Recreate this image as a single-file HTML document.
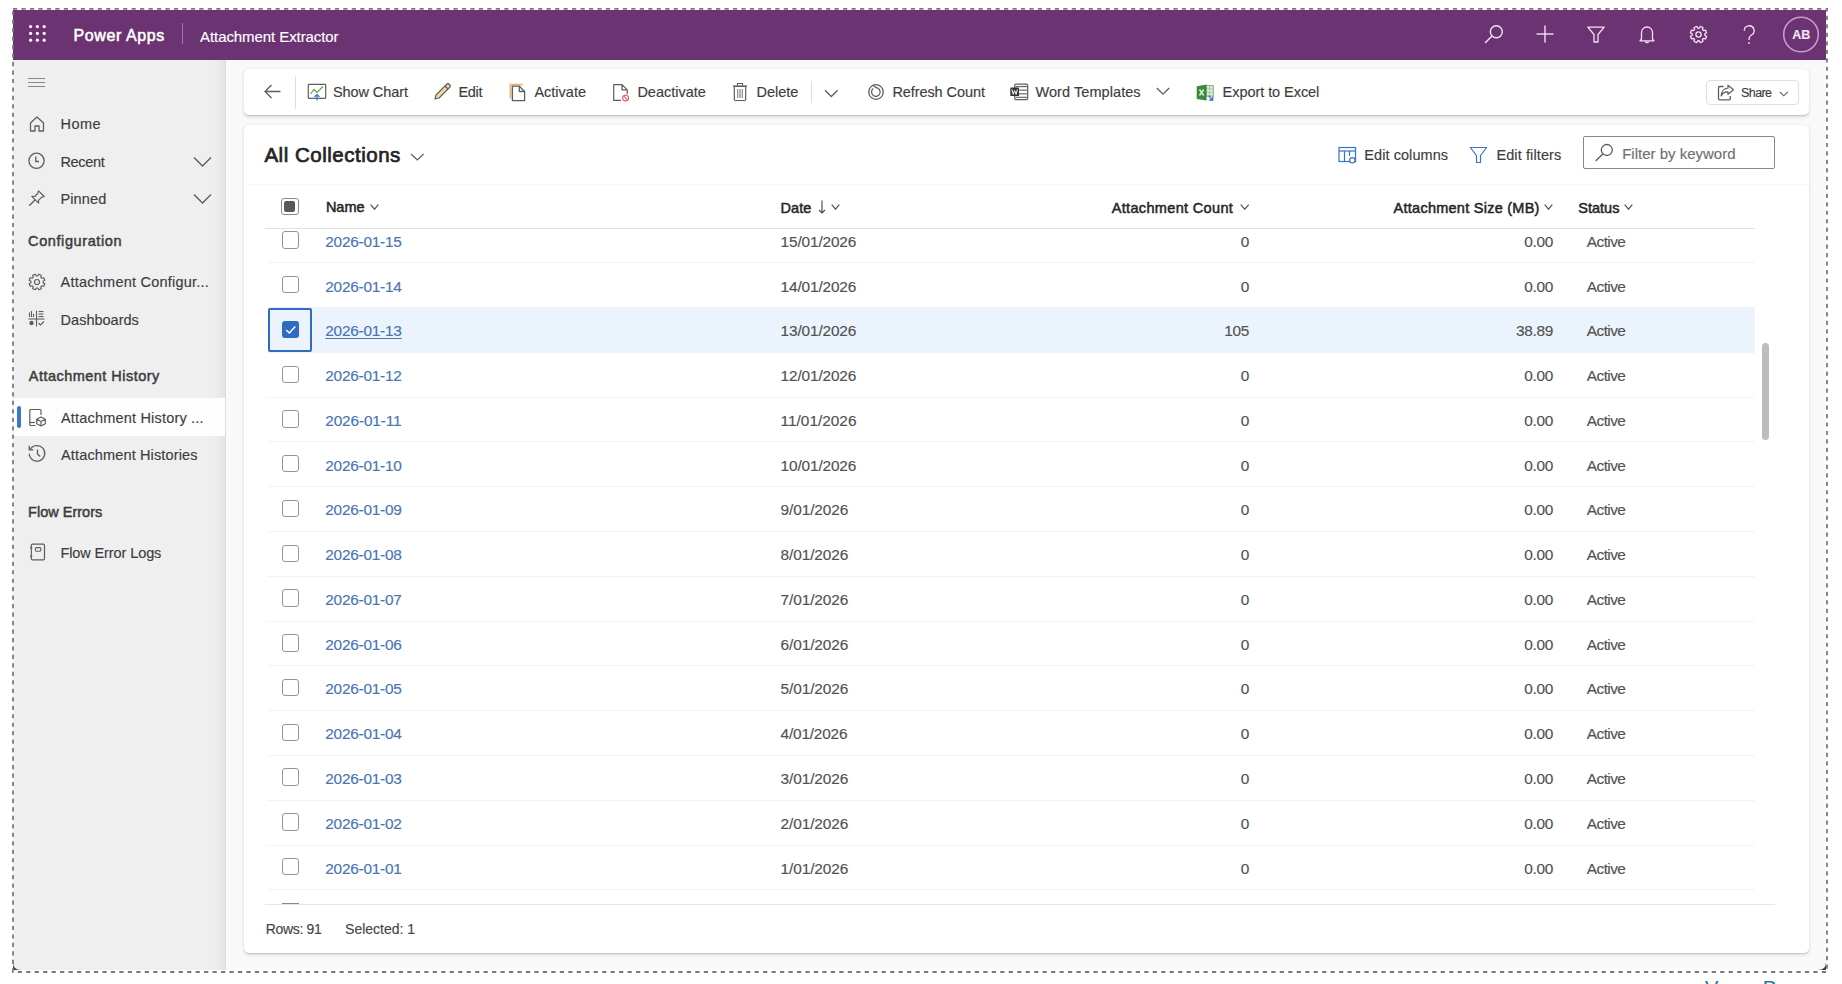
<!DOCTYPE html>
<html><head><meta charset="utf-8"><style>
html,body{margin:0;padding:0;}
body{width:1842px;height:984px;overflow:hidden;position:relative;background:#fff;font-family:"Liberation Sans", sans-serif;}
.t{position:absolute;white-space:nowrap;font-family:"Liberation Sans", sans-serif;-webkit-text-stroke:0.15px currentColor;}
</style></head><body>
<div style="position:absolute;left:13px;top:10px;width:1813px;height:50px;background:#6b3371"></div>
<div style="position:absolute;left:13px;top:60px;width:213px;height:910px;background:#efefef"></div>
<div style="position:absolute;left:213px;top:60px;width:13px;height:910px;background:linear-gradient(to right, rgba(0,0,0,0) , rgba(0,0,0,0.03) 60%, rgba(0,0,0,0.05) 90%, rgba(0,0,0,0.09))"></div>
<div style="position:absolute;left:226px;top:60px;width:1600px;height:910px;background:#f9f9f9"></div>
<svg style="position:absolute;left:29px;top:25px;" width="18" height="18" viewBox="0 0 18 18"><circle cx="1.60" cy="1.60" r="1.6" fill="#fff"/><circle cx="1.60" cy="8.40" r="1.6" fill="#fff"/><circle cx="1.60" cy="15.20" r="1.6" fill="#fff"/><circle cx="8.40" cy="1.60" r="1.6" fill="#fff"/><circle cx="8.40" cy="8.40" r="1.6" fill="#fff"/><circle cx="8.40" cy="15.20" r="1.6" fill="#fff"/><circle cx="15.20" cy="1.60" r="1.6" fill="#fff"/><circle cx="15.20" cy="8.40" r="1.6" fill="#fff"/><circle cx="15.20" cy="15.20" r="1.6" fill="#fff"/></svg>
<div id="t6602c46b" class="t" style="left:73.40px;top:27.96px;font-size:16px;line-height:16px;font-weight:400;-webkit-text-stroke:0.54px #ffffff;color:#ffffff;letter-spacing:0.622px;">Power Apps</div>
<div style="position:absolute;left:182px;top:23px;width:1px;height:21px;background:rgba(255,255,255,0.35)"></div>
<div id="t18563bde" class="t" style="left:200.10px;top:28.80px;font-size:15px;line-height:15px;font-weight:400;color:#ffffff;letter-spacing:-0.084px;">Attachment Extractor</div>
<svg style="position:absolute;left:1484px;top:24px;" width="20" height="20" viewBox="0 0 20 20"><circle cx="12.3" cy="7.7" r="6" fill="none" stroke="#f3e3f3" stroke-width="1.4"/><line x1="8" y1="12" x2="1.5" y2="18.5" stroke="#f3e3f3" stroke-width="1.5" stroke-linecap="round"/></svg>
<svg style="position:absolute;left:1535px;top:24px;" width="20" height="20" viewBox="0 0 20 20"><line x1="10" y1="1.5" x2="10" y2="18.5" stroke="#f3e3f3" stroke-width="1.4"/><line x1="1.5" y1="10" x2="18.5" y2="10" stroke="#f3e3f3" stroke-width="1.4"/></svg>
<svg style="position:absolute;left:1586px;top:25px;" width="20" height="19" viewBox="0 0 20 19"><path d="M1.8 2.2 H18.2 L12 9.5 V17 H8 V9.5 Z" fill="none" stroke="#f3e3f3" stroke-width="1.3" stroke-linejoin="round"/></svg>
<svg style="position:absolute;left:1638px;top:25px;" width="18" height="19" viewBox="0 0 18 19"><path d="M3.5 14 V7.5 A5.5 5.5 0 0 1 14.5 7.5 V14 L16 15.8 H2 Z" fill="none" stroke="#f3e3f3" stroke-width="1.3" stroke-linejoin="round"/><path d="M7.3 16.5 A1.8 1.8 0 0 0 10.7 16.5" fill="none" stroke="#f3e3f3" stroke-width="1.3"/></svg>
<svg style="position:absolute;left:1689px;top:25px;" width="19" height="19" viewBox="0 0 19 19"><path d="M10.21 3.24 L11.30 1.40 L13.96 2.50 L13.42 4.57 L14.43 5.58 L16.50 5.04 L17.60 7.70 L15.76 8.79 L15.76 10.21 L17.60 11.30 L16.50 13.96 L14.43 13.42 L13.42 14.43 L13.96 16.50 L11.30 17.60 L10.21 15.76 L8.79 15.76 L7.70 17.60 L5.04 16.50 L5.58 14.43 L4.57 13.42 L2.50 13.96 L1.40 11.30 L3.24 10.21 L3.24 8.79 L1.40 7.70 L2.50 5.04 L4.57 5.58 L5.58 4.57 L5.04 2.50 L7.70 1.40 L8.79 3.24 Z" fill="none" stroke="#f3e3f3" stroke-width="1.3" stroke-linejoin="round"/><circle cx="9.5" cy="9.5" r="2.6" fill="none" stroke="#f3e3f3" stroke-width="1.3"/></svg>
<svg style="position:absolute;left:1742px;top:24.5px;" width="14" height="20" viewBox="0 0 14 20"><path d="M2.3 5.8 A4.9 4.9 0 1 1 9.5 10 Q7 11.5 7 14 V15" fill="none" stroke="#f3e3f3" stroke-width="1.3"/><circle cx="7" cy="18" r="0.9" fill="#f3e3f3"/></svg>
<svg style="position:absolute;left:1782px;top:16px;" width="38" height="38" viewBox="0 0 38 38"><circle cx="19" cy="18.5" r="17.3" fill="none" stroke="#c89bcf" stroke-width="1.6"/></svg>
<div id="t0d88fd11" class="t" style="left:1792.30px;top:29.12px;font-size:12.5px;line-height:12.5px;font-weight:700;color:#f3e3f3;">AB</div>
<div style="position:absolute;left:28px;top:78px;width:17px;height:1px;background:#8a8886"></div>
<div style="position:absolute;left:28px;top:82px;width:17px;height:1px;background:#8a8886"></div>
<div style="position:absolute;left:28px;top:86px;width:17px;height:1px;background:#8a8886"></div>
<svg style="position:absolute;left:28px;top:115px;" width="18" height="18" viewBox="0 0 18 18"><path d="M2.5 8 L9 2 L15.5 8 V16 H11 V11 H7 V16 H2.5 Z" fill="none" stroke="#605e5c" stroke-width="1.3" stroke-linejoin="round"/></svg>
<div id="t21c2358d" class="t" style="left:60.40px;top:117.33px;font-size:14.5px;line-height:14.5px;font-weight:400;color:#3d3d3d;letter-spacing:0.533px;">Home</div>
<svg style="position:absolute;left:27px;top:152px;" width="19" height="18" viewBox="0 0 19 18"><circle cx="9.5" cy="8.8" r="7.6" fill="none" stroke="#605e5c" stroke-width="1.3"/><path d="M8.8 4.5 V9.5 H12" fill="none" stroke="#605e5c" stroke-width="1.3"/></svg>
<div id="tbc1d9790" class="t" style="left:60.40px;top:155.03px;font-size:14.5px;line-height:14.5px;font-weight:400;color:#3d3d3d;letter-spacing:-0.320px;">Recent</div>
<svg style="position:absolute;left:193px;top:156px;" width="19" height="12" viewBox="0 0 19 12"><path d="M1 1.5 L9.5 10 L18 1.5" fill="none" stroke="#605e5c" stroke-width="1.4"/></svg>
<svg style="position:absolute;left:28px;top:189px;" width="18" height="18" viewBox="0 0 18 18"><path d="M10.5 1.8 L16.2 7.5 L13.5 8.3 L10.5 11.3 L10.6 14.2 L3.8 7.4 L6.7 7.5 L9.7 4.5 Z" fill="none" stroke="#605e5c" stroke-width="1.2" stroke-linejoin="round"/><line x1="7.2" y1="10.8" x2="1.2" y2="16.8" stroke="#605e5c" stroke-width="1.3"/></svg>
<div id="tdf337dc0" class="t" style="left:60.40px;top:191.73px;font-size:14.5px;line-height:14.5px;font-weight:400;color:#3d3d3d;letter-spacing:0.160px;">Pinned</div>
<svg style="position:absolute;left:193px;top:193px;" width="19" height="12" viewBox="0 0 19 12"><path d="M1 1.5 L9.5 10 L18 1.5" fill="none" stroke="#605e5c" stroke-width="1.4"/></svg>
<div id="t0e8f6c4d" class="t" style="left:28.10px;top:233.83px;font-size:14.5px;line-height:14.5px;font-weight:400;-webkit-text-stroke:0.49px #3d3d3d;color:#3d3d3d;letter-spacing:0.600px;">Configuration</div>
<svg style="position:absolute;left:28px;top:272.5px;" width="18" height="18" viewBox="0 0 18 18"><path d="M9.69 2.94 L10.73 1.19 L13.30 2.25 L12.80 4.23 L13.77 5.20 L15.75 4.70 L16.81 7.27 L15.06 8.31 L15.06 9.69 L16.81 10.73 L15.75 13.30 L13.77 12.80 L12.80 13.77 L13.30 15.75 L10.73 16.81 L9.69 15.06 L8.31 15.06 L7.27 16.81 L4.70 15.75 L5.20 13.77 L4.23 12.80 L2.25 13.30 L1.19 10.73 L2.94 9.69 L2.94 8.31 L1.19 7.27 L2.25 4.70 L4.23 5.20 L5.20 4.23 L4.70 2.25 L7.27 1.19 L8.31 2.94 Z" fill="none" stroke="#605e5c" stroke-width="1.15" stroke-linejoin="round"/><circle cx="9" cy="9" r="2.5" fill="none" stroke="#605e5c" stroke-width="1.15"/></svg>
<div id="te1aa6203" class="t" style="left:60.60px;top:275.23px;font-size:14.5px;line-height:14.5px;font-weight:400;color:#3d3d3d;letter-spacing:0.229px;">Attachment Configur...</div>
<svg style="position:absolute;left:28px;top:310px;" width="17" height="17" viewBox="0 0 17 17"><g stroke="#605e5c" stroke-width="1.1" fill="none"><line x1="8.5" y1="0.5" x2="8.5" y2="16.5"/><line x1="0.5" y1="9" x2="16.5" y2="9"/><line x1="10.5" y1="1.5" x2="15.5" y2="1.5"/><line x1="10.5" y1="4" x2="15.5" y2="4"/><line x1="10.5" y1="6.5" x2="15.5" y2="6.5"/><line x1="1.5" y1="2.5" x2="1.5" y2="7"/><line x1="3.5" y1="1" x2="3.5" y2="7"/><line x1="5.5" y1="4" x2="5.5" y2="7"/><path d="M10.5 13 L12.5 15 L16 11.5"/></g><circle cx="3.5" cy="13" r="2.2" fill="#605e5c"/></svg>
<div id="ta0304d43" class="t" style="left:60.60px;top:313.03px;font-size:14.5px;line-height:14.5px;font-weight:400;color:#3d3d3d;">Dashboards</div>
<div id="t8ec4744f" class="t" style="left:28.76px;top:369.23px;font-size:14.5px;line-height:14.5px;font-weight:400;-webkit-text-stroke:0.49px #3d3d3d;color:#3d3d3d;letter-spacing:0.471px;">Attachment History</div>
<div style="position:absolute;left:14px;top:397.5px;width:211px;height:38px;background:#fdfdfd"></div>
<div style="position:absolute;left:17px;top:406px;width:4px;height:21.5px;background:#3a76c8;border-radius:2px"></div>
<svg style="position:absolute;left:28px;top:407.5px;" width="19" height="19" viewBox="0 0 19 19"><path d="M7.5 17.5 H2.8 Q1.8 17.5 1.8 16.5 V2.5 Q1.8 1.5 2.8 1.5 H12 Q13 1.5 13 2.5 V7" fill="none" stroke="#605e5c" stroke-width="1.2"/><line x1="2" y1="14.5" x2="7" y2="14.5" stroke="#605e5c" stroke-width="1.2"/><path d="M13 9 L17.3 11.3 V15.8 L13 18 L8.7 15.8 V11.3 Z M8.7 11.3 L13 13.5 L17.3 11.3 M13 13.5 V18" fill="none" stroke="#605e5c" stroke-width="1.2" stroke-linejoin="round"/></svg>
<div id="td2493323" class="t" style="left:61.00px;top:410.73px;font-size:14.5px;line-height:14.5px;font-weight:400;color:#3d3d3d;letter-spacing:0.190px;">Attachment History ...</div>
<svg style="position:absolute;left:27px;top:444px;" width="20" height="19" viewBox="0 0 20 19"><path d="M3.2 5.5 A7.8 7.8 0 1 1 2.2 9.8" fill="none" stroke="#605e5c" stroke-width="1.3"/><path d="M2.3 1.8 V5.8 H6.3" fill="none" stroke="#605e5c" stroke-width="1.3"/><path d="M10.5 5.5 V10 L13.2 12.5" fill="none" stroke="#605e5c" stroke-width="1.3"/></svg>
<div id="te2b8dc9a" class="t" style="left:61.00px;top:447.73px;font-size:14.5px;line-height:14.5px;font-weight:400;color:#3d3d3d;letter-spacing:0.147px;">Attachment Histories</div>
<div id="t1640815b" class="t" style="left:28.10px;top:504.63px;font-size:14.5px;line-height:14.5px;font-weight:400;-webkit-text-stroke:0.49px #3d3d3d;color:#3d3d3d;">Flow Errors</div>
<svg style="position:absolute;left:29px;top:543px;" width="17" height="18" viewBox="0 0 17 18"><rect x="2.3" y="1.2" width="13.2" height="15.6" rx="1.3" fill="none" stroke="#605e5c" stroke-width="1.2"/><rect x="6.3" y="4.6" width="5.6" height="3.6" rx="1.2" fill="none" stroke="#605e5c" stroke-width="1.1"/><circle cx="2.3" cy="4.9" r="1.1" fill="#605e5c"/><circle cx="2.3" cy="13.3" r="1.1" fill="#605e5c"/></svg>
<div id="te9519f22" class="t" style="left:60.40px;top:546.03px;font-size:14.5px;line-height:14.5px;font-weight:400;color:#3d3d3d;letter-spacing:-0.097px;">Flow Error Logs</div>
<div style="position:absolute;left:244px;top:69px;width:1565px;height:46px;background:#fff;border-radius:5px;box-shadow:0 1.6px 3.6px rgba(0,0,0,0.13),0 0.3px 0.9px rgba(0,0,0,0.11);"></div>
<svg style="position:absolute;left:263px;top:83px;" width="19" height="17" viewBox="0 0 19 17"><path d="M17.5 8.5 H2 M8.5 2 L2 8.5 L8.5 15" fill="none" stroke="#605e5c" stroke-width="1.3"/></svg>
<div style="position:absolute;left:295px;top:75.5px;width:1px;height:33px;background:#e1dfdd"></div>
<svg style="position:absolute;left:307px;top:83px;" width="20" height="18" viewBox="0 0 20 18"><rect x="1.3" y="1.3" width="17.4" height="14" rx="0.5" fill="none" stroke="#605e5c" stroke-width="1.2"/><path d="M3.5 11 L7 6.5 L10 9.5 L16 3.5" fill="none" stroke="#5fa34f" stroke-width="1.2"/><path d="M10 17.5 V11.5 M7.5 14 L10 11.5 L12.5 14" fill="none" stroke="#4a7fd0" stroke-width="1.4"/></svg>
<div id="td1f824ee" class="t" style="left:333.00px;top:85.13px;font-size:14.5px;line-height:14.5px;font-weight:400;color:#3d3d3d;letter-spacing:-0.089px;">Show Chart</div>
<svg style="position:absolute;left:433px;top:82px;" width="19" height="19" viewBox="0 0 19 19"><path d="M3 13 L13.5 2.5 Q15 1 16.5 2.5 Q18 4 16.5 5.5 L6 16 L2 17 Z" fill="#f1dca0" stroke="#605e5c" stroke-width="1.2" stroke-linejoin="round"/><line x1="12" y1="4" x2="15" y2="7" stroke="#605e5c" stroke-width="1.1"/></svg>
<div id="tf201ab12" class="t" style="left:458.40px;top:85.13px;font-size:14.5px;line-height:14.5px;font-weight:400;color:#3d3d3d;letter-spacing:-0.267px;">Edit</div>
<svg style="position:absolute;left:509px;top:82.5px;" width="17" height="19" viewBox="0 0 17 19"><path d="M1.5 15.5 V1.6 H13.6" fill="none" stroke="#f0b27e" stroke-width="1.9"/><path d="M3.4 3.2 H10.3 L15.6 8.5 V17.6 H3.4 Z M10.3 3.2 V8.5 H15.6" fill="#fff" stroke="#605e5c" stroke-width="1.3" stroke-linejoin="round"/></svg>
<div id="tba5afecd" class="t" style="left:534.40px;top:85.13px;font-size:14.5px;line-height:14.5px;font-weight:400;color:#3d3d3d;">Activate</div>
<svg style="position:absolute;left:612px;top:82.5px;" width="19" height="19" viewBox="0 0 19 19"><path d="M9 17.4 H1.7 V1.6 H10 L15.3 6.9 V11 M10 1.6 V6.9 H15.3" fill="none" stroke="#605e5c" stroke-width="1.2" stroke-linejoin="round"/><circle cx="13.6" cy="15" r="2.9" fill="#fff" stroke="#e2686b" stroke-width="1.2"/><line x1="11.7" y1="13.1" x2="15.5" y2="16.9" stroke="#e2686b" stroke-width="1.2"/></svg>
<div id="t9d1102dd" class="t" style="left:637.40px;top:85.13px;font-size:14.5px;line-height:14.5px;font-weight:400;color:#3d3d3d;">Deactivate</div>
<svg style="position:absolute;left:732px;top:82px;" width="16" height="20" viewBox="0 0 16 20"><path d="M2.3 4.5 H13.7 V17.3 Q13.7 18.5 12.5 18.5 H3.5 Q2.3 18.5 2.3 17.3 Z" fill="none" stroke="#605e5c" stroke-width="1.2"/><line x1="0.8" y1="4" x2="15.2" y2="4" stroke="#605e5c" stroke-width="1.2"/><path d="M5.5 3.8 V1.5 H10.5 V3.8" fill="none" stroke="#605e5c" stroke-width="1.1"/><g stroke="#8a8886" stroke-width="0.9"><line x1="5.5" y1="7" x2="5.5" y2="16"/><line x1="7.2" y1="7" x2="7.2" y2="16"/><line x1="8.8" y1="7" x2="8.8" y2="16"/><line x1="10.5" y1="7" x2="10.5" y2="16"/></g></svg>
<div id="t21c448c7" class="t" style="left:756.50px;top:85.13px;font-size:14.5px;line-height:14.5px;font-weight:400;color:#3d3d3d;">Delete</div>
<div style="position:absolute;left:811px;top:81px;width:1px;height:21.5px;background:#e1dfdd"></div>
<svg style="position:absolute;left:824px;top:89px;" width="15" height="9" viewBox="0 0 15 9"><path d="M1 1.3 L7.3 7.5 L13.6 1.3" fill="none" stroke="#605e5c" stroke-width="1.3"/></svg>
<svg style="position:absolute;left:867px;top:83px;" width="18" height="18" viewBox="0 0 18 18"><circle cx="9" cy="9" r="7.3" fill="none" stroke="#605e5c" stroke-width="1.3"/><path d="M6.2 5.6 A4.3 4.3 0 1 0 9 4.7" fill="none" stroke="#605e5c" stroke-width="1.3"/><line x1="9" y1="4.7" x2="6.3" y2="2.3" stroke="#605e5c" stroke-width="1.2"/></svg>
<div id="t2cdb91ce" class="t" style="left:892.40px;top:85.13px;font-size:14.5px;line-height:14.5px;font-weight:400;color:#3d3d3d;letter-spacing:-0.080px;">Refresh Count</div>
<svg style="position:absolute;left:1009px;top:83px;" width="20" height="18" viewBox="0 0 20 18"><rect x="5.7" y="1.1" width="13" height="15.6" rx="1.2" fill="#fff" stroke="#605e5c" stroke-width="1.2"/><g stroke="#605e5c" stroke-width="1.1"><line x1="6.5" y1="3.6" x2="18" y2="3.6"/><line x1="6.5" y1="7.2" x2="18" y2="7.2"/><line x1="6.5" y1="10.8" x2="18" y2="10.8"/><line x1="6.5" y1="14.3" x2="18" y2="14.3"/></g><rect x="1.3" y="4.4" width="8.7" height="8.6" rx="0.6" fill="#34343e"/><path d="M2.9 6.4 L4.2 11.3 L5.65 7.6 L7.1 11.3 L8.4 6.4" fill="none" stroke="#fff" stroke-width="1"/></svg>
<div id="t716e14a8" class="t" style="left:1035.50px;top:84.83px;font-size:14.5px;line-height:14.5px;font-weight:400;color:#3d3d3d;letter-spacing:0.068px;">Word Templates</div>
<svg style="position:absolute;left:1156px;top:87px;" width="14" height="8.5" viewBox="0 0 14 8.5"><path d="M0.8 1 L7 7.2 L13.2 1" fill="none" stroke="#605e5c" stroke-width="1.3"/></svg>
<svg style="position:absolute;left:1195px;top:82.5px;" width="20" height="19" viewBox="0 0 20 19"><rect x="11" y="2.6" width="7.3" height="10.5" fill="#dcefd6" stroke="#86a886" stroke-width="1"/><g stroke="#a6c8a0" stroke-width="0.9"><line x1="14.6" y1="2.6" x2="14.6" y2="13"/><line x1="11" y1="6" x2="18.3" y2="6"/><line x1="11" y1="9.5" x2="18.3" y2="9.5"/></g><path d="M1.7 3.2 L11.6 1.6 V17.6 L1.7 15.9 Z" fill="#3b8a3e"/><path d="M4.5 6.5 L8.7 12.5 M8.7 6.5 L4.5 12.5" fill="none" stroke="#d9f0d9" stroke-width="1.5"/><path d="M13.6 12.6 L17.2 16.6 M17.9 13.6 L17.5 17.2 L14.3 17" fill="none" stroke="#4a6ec6" stroke-width="1.4"/></svg>
<div id="t31882036" class="t" style="left:1222.60px;top:84.83px;font-size:14.5px;line-height:14.5px;font-weight:400;color:#3d3d3d;letter-spacing:-0.057px;">Export to Excel</div>
<div style="position:absolute;left:1706px;top:80px;width:92.5px;height:24.5px;box-sizing:border-box;border:1px solid #e1dfdd;border-radius:4px;background:#fff"></div>
<svg style="position:absolute;left:1717px;top:83.5px;" width="18" height="17" viewBox="0 0 18 17"><path d="M6.5 2.5 H2.8 Q1.5 2.5 1.5 3.8 V14.5 Q1.5 15.8 2.8 15.8 H12 Q13.3 15.8 13.3 14.5 V12" fill="none" stroke="#605e5c" stroke-width="1.3"/><path d="M11 1.2 L16.5 5.8 L11 10.3 V7.8 Q6 7.5 4.2 12 Q4.8 4.5 11 4 Z" fill="none" stroke="#605e5c" stroke-width="1.2" stroke-linejoin="round"/></svg>
<div id="t0bdfb0ec" class="t" style="left:1741.00px;top:86.52px;font-size:12.5px;line-height:12.5px;font-weight:400;color:#3d3d3d;letter-spacing:-0.580px;">Share</div>
<svg style="position:absolute;left:1778.5px;top:90.5px;" width="10" height="6" viewBox="0 0 10 6"><path d="M0.8 0.8 L4.8 4.8 L8.8 0.8" fill="none" stroke="#605e5c" stroke-width="1.1"/></svg>
<div style="position:absolute;left:244px;top:124.5px;width:1565px;height:828px;background:#fff;border-radius:5px;box-shadow:0 1.6px 3.6px rgba(0,0,0,0.13),0 0.3px 0.9px rgba(0,0,0,0.11);"></div>
<div style="position:absolute;left:244px;top:183.5px;width:1565px;height:1px;background:#f8f8f8"></div>
<div id="tb897ce02" class="t" style="left:264.40px;top:145.15px;font-size:20.5px;line-height:20.5px;font-weight:400;-webkit-text-stroke:0.70px #242424;color:#242424;letter-spacing:0.514px;">All Collections</div>
<svg style="position:absolute;left:409.5px;top:152.5px;" width="15" height="8" viewBox="0 0 15 8"><path d="M1 1 L7.3 7 L13.6 1" fill="none" stroke="#605e5c" stroke-width="1.2"/></svg>
<svg style="position:absolute;left:1338px;top:146px;" width="19" height="18" viewBox="0 0 19 18"><rect x="1" y="1.5" width="16.5" height="14" fill="none" stroke="#3a72c4" stroke-width="1.2"/><line x1="1" y1="5" x2="17.5" y2="5" stroke="#3a72c4" stroke-width="1.2"/><line x1="6.5" y1="5" x2="6.5" y2="15.5" stroke="#3a72c4" stroke-width="1.2"/><line x1="11.5" y1="5" x2="11.5" y2="10" stroke="#3a72c4" stroke-width="1.2"/><circle cx="14.3" cy="14.3" r="2.7" fill="#fff" stroke="#3a72c4" stroke-width="1.2"/></svg>
<div id="tb2f9ebc7" class="t" style="left:1364.24px;top:148.23px;font-size:14.5px;line-height:14.5px;font-weight:400;color:#3d3d3d;letter-spacing:0.080px;">Edit columns</div>
<svg style="position:absolute;left:1469px;top:146px;" width="20" height="18" viewBox="0 0 20 18"><path d="M1.3 1.5 H17.7 L11.5 9.5 V16.5 H7.5 V9.5 Z" fill="none" stroke="#3a72c4" stroke-width="1.2" stroke-linejoin="round"/></svg>
<div id="tec400adc" class="t" style="left:1496.40px;top:148.23px;font-size:14.5px;line-height:14.5px;font-weight:400;color:#3d3d3d;letter-spacing:0.109px;">Edit filters</div>
<div style="position:absolute;left:1583px;top:135.5px;width:192px;height:33.5px;box-sizing:border-box;border:1px solid #8a8886;border-radius:2px;background:#fff"></div>
<svg style="position:absolute;left:1595px;top:143px;" width="19" height="19" viewBox="0 0 19 19"><circle cx="11.8" cy="7" r="5.5" fill="none" stroke="#605e5c" stroke-width="1.3"/><line x1="7.8" y1="11" x2="1.2" y2="17.6" stroke="#605e5c" stroke-width="1.4" stroke-linecap="round"/></svg>
<div id="t1c2b44e3" class="t" style="left:1622.20px;top:146.20px;font-size:15px;line-height:15px;font-weight:400;color:#707070;">Filter by keyword</div>
<div style="position:absolute;left:281px;top:197.5px;width:17.5px;height:17.5px;box-sizing:border-box;border:1px solid #8a8886;border-radius:3px;background:#fff"></div>
<div style="position:absolute;left:284px;top:201.2px;width:11px;height:11px;background:#595959;border-radius:2px"></div>
<div id="t7242ff84" class="t" style="left:325.90px;top:200.43px;font-size:14.5px;line-height:14.5px;font-weight:400;-webkit-text-stroke:0.49px #242424;color:#242424;">Name</div>
<svg style="position:absolute;left:369.8px;top:203.5px;" width="9" height="6.5" viewBox="0 0 9 6.5"><path d="M0.7 0.7 L4.5 5.2 L8.3 0.7" fill="none" stroke="#505050" stroke-width="1.2"/></svg>
<div id="te2e174c2" class="t" style="left:780.60px;top:200.53px;font-size:14.5px;line-height:14.5px;font-weight:400;-webkit-text-stroke:0.49px #242424;color:#242424;">Date</div>
<svg style="position:absolute;left:817px;top:199.5px;" width="10" height="14" viewBox="0 0 10 14"><path d="M5 0.5 V13 M2 10 L5 13 L8 10" fill="none" stroke="#4a4a4a" stroke-width="1.15"/></svg>
<svg style="position:absolute;left:830.5px;top:203.5px;" width="9" height="6.5" viewBox="0 0 9 6.5"><path d="M0.7 0.7 L4.5 5.2 L8.3 0.7" fill="none" stroke="#505050" stroke-width="1.2"/></svg>
<div id="t293b9644" class="t" style="left:1111.70px;top:200.53px;font-size:14.5px;line-height:14.5px;font-weight:400;-webkit-text-stroke:0.49px #242424;color:#242424;letter-spacing:0.341px;">Attachment Count</div>
<svg style="position:absolute;left:1239.5px;top:203.5px;" width="9.5" height="6.5" viewBox="0 0 9.5 6.5"><path d="M0.7 0.7 L4.75 5.2 L8.8 0.7" fill="none" stroke="#505050" stroke-width="1.2"/></svg>
<div id="t4f75a400" class="t" style="left:1393.60px;top:200.53px;font-size:14.5px;line-height:14.5px;font-weight:400;-webkit-text-stroke:0.49px #242424;color:#242424;letter-spacing:0.253px;">Attachment Size (MB)</div>
<svg style="position:absolute;left:1544.3px;top:203.5px;" width="9" height="6.5" viewBox="0 0 9 6.5"><path d="M0.7 0.7 L4.5 5.2 L8.3 0.7" fill="none" stroke="#505050" stroke-width="1.2"/></svg>
<div id="t5216732d" class="t" style="left:1578.30px;top:200.53px;font-size:14.5px;line-height:14.5px;font-weight:400;-webkit-text-stroke:0.49px #242424;color:#242424;">Status</div>
<svg style="position:absolute;left:1623.8px;top:203.5px;" width="9" height="6.5" viewBox="0 0 9 6.5"><path d="M0.7 0.7 L4.5 5.2 L8.3 0.7" fill="none" stroke="#505050" stroke-width="1.2"/></svg>
<div style="position:absolute;left:265px;top:228.3px;width:1490px;height:1px;background:#e1e1e1"></div>
<div style="position:absolute;left:267px;top:262.0px;width:1488px;height:1px;background:#f3f3f3"></div>
<div style="position:absolute;left:281.5px;top:231.20000000000002px;width:17.4px;height:17.4px;box-sizing:border-box;border:1px solid #959595;border-radius:3px;background:#fff"></div>
<div id="t423146ea" class="t" style="left:325.30px;top:233.76px;font-size:15.4px;line-height:15.4px;font-weight:400;color:#4874b2;letter-spacing:-0.240px;">2026-01-15</div>
<div id="t592b2245" class="t" style="left:780.60px;top:233.76px;font-size:15.4px;line-height:15.4px;font-weight:400;color:#515151;letter-spacing:-0.142px;">15/01/2026</div>
<div class="t" style="right:593.10px;top:233.76px;font-size:15.4px;line-height:15.4px;color:#515151;letter-spacing:-0.25px;margin-right:-0.25px">0</div>
<div class="t" style="right:289.10px;top:233.76px;font-size:15.4px;line-height:15.4px;color:#515151;letter-spacing:-0.25px;margin-right:-0.25px">0.00</div>
<div id="t43a1775d" class="t" style="left:1586.80px;top:233.76px;font-size:15.4px;line-height:15.4px;font-weight:400;color:#515151;letter-spacing:-0.560px;">Active</div>
<div style="position:absolute;left:267px;top:306.5px;width:1488px;height:1px;background:#f3f3f3"></div>
<div style="position:absolute;left:281.5px;top:275.96999999999997px;width:17.4px;height:17.4px;box-sizing:border-box;border:1px solid #959595;border-radius:3px;background:#fff"></div>
<div id="t96b8e9f1" class="t" style="left:325.30px;top:278.53px;font-size:15.4px;line-height:15.4px;font-weight:400;color:#4874b2;letter-spacing:-0.240px;">2026-01-14</div>
<div id="t322c0246" class="t" style="left:780.60px;top:278.53px;font-size:15.4px;line-height:15.4px;font-weight:400;color:#515151;letter-spacing:-0.142px;">14/01/2026</div>
<div class="t" style="right:593.10px;top:278.53px;font-size:15.4px;line-height:15.4px;color:#515151;letter-spacing:-0.25px;margin-right:-0.25px">0</div>
<div class="t" style="right:289.10px;top:278.53px;font-size:15.4px;line-height:15.4px;color:#515151;letter-spacing:-0.25px;margin-right:-0.25px">0.00</div>
<div id="t7e1d7fdb" class="t" style="left:1586.80px;top:278.53px;font-size:15.4px;line-height:15.4px;font-weight:400;color:#515151;letter-spacing:-0.560px;">Active</div>
<div style="position:absolute;left:268px;top:307px;width:1487px;height:44.8px;background:#ebf3fc"></div>
<div style="position:absolute;left:267px;top:351.5px;width:1488px;height:1px;background:#f3f3f3"></div>
<div style="position:absolute;left:268px;top:307.5px;width:44px;height:44px;box-sizing:border-box;border:2px solid #2f6cc0;border-radius:2px"></div>
<div style="position:absolute;left:281.5px;top:321.04px;width:17.3px;height:17.3px;background:#2f6cc0;border-radius:3px"></div>
<svg style="position:absolute;left:281.5px;top:321.04px;" width="17.3" height="17.3" viewBox="0 0 17.3 17.3"><path d="M4.2 9 L7.3 12 L13.3 5.5" fill="none" stroke="#fff" stroke-width="1.5"/></svg>
<div id="t7db7949a" class="t" style="left:325.30px;top:323.30px;font-size:15.4px;line-height:15.4px;font-weight:400;color:#4874b2;letter-spacing:-0.240px;text-decoration:underline;text-underline-offset:2px;">2026-01-13</div>
<div id="tb6531886" class="t" style="left:780.60px;top:323.30px;font-size:15.4px;line-height:15.4px;font-weight:400;color:#515151;letter-spacing:-0.142px;">13/01/2026</div>
<div class="t" style="right:593.10px;top:323.30px;font-size:15.4px;line-height:15.4px;color:#515151;letter-spacing:-0.25px;margin-right:-0.25px">105</div>
<div class="t" style="right:289.10px;top:323.30px;font-size:15.4px;line-height:15.4px;color:#515151;letter-spacing:-0.25px;margin-right:-0.25px">38.89</div>
<div id="tdf58e863" class="t" style="left:1586.80px;top:323.30px;font-size:15.4px;line-height:15.4px;font-weight:400;color:#515151;letter-spacing:-0.560px;">Active</div>
<div style="position:absolute;left:267px;top:396.5px;width:1488px;height:1px;background:#f3f3f3"></div>
<div style="position:absolute;left:281.5px;top:365.51px;width:17.4px;height:17.4px;box-sizing:border-box;border:1px solid #959595;border-radius:3px;background:#fff"></div>
<div id="t6c8b2072" class="t" style="left:325.30px;top:368.07px;font-size:15.4px;line-height:15.4px;font-weight:400;color:#4874b2;letter-spacing:-0.240px;">2026-01-12</div>
<div id="t1f4d3c7b" class="t" style="left:780.60px;top:368.07px;font-size:15.4px;line-height:15.4px;font-weight:400;color:#515151;letter-spacing:-0.142px;">12/01/2026</div>
<div class="t" style="right:593.10px;top:368.07px;font-size:15.4px;line-height:15.4px;color:#515151;letter-spacing:-0.25px;margin-right:-0.25px">0</div>
<div class="t" style="right:289.10px;top:368.07px;font-size:15.4px;line-height:15.4px;color:#515151;letter-spacing:-0.25px;margin-right:-0.25px">0.00</div>
<div id="tdad50611" class="t" style="left:1586.80px;top:368.07px;font-size:15.4px;line-height:15.4px;font-weight:400;color:#515151;letter-spacing:-0.560px;">Active</div>
<div style="position:absolute;left:267px;top:441.0px;width:1488px;height:1px;background:#f3f3f3"></div>
<div style="position:absolute;left:281.5px;top:410.28px;width:17.4px;height:17.4px;box-sizing:border-box;border:1px solid #959595;border-radius:3px;background:#fff"></div>
<div id="t0442afad" class="t" style="left:325.30px;top:412.84px;font-size:15.4px;line-height:15.4px;font-weight:400;color:#4874b2;letter-spacing:-0.151px;">2026-01-11</div>
<div id="t48413c93" class="t" style="left:780.60px;top:412.84px;font-size:15.4px;line-height:15.4px;font-weight:400;color:#515151;">11/01/2026</div>
<div class="t" style="right:593.10px;top:412.84px;font-size:15.4px;line-height:15.4px;color:#515151;letter-spacing:-0.25px;margin-right:-0.25px">0</div>
<div class="t" style="right:289.10px;top:412.84px;font-size:15.4px;line-height:15.4px;color:#515151;letter-spacing:-0.25px;margin-right:-0.25px">0.00</div>
<div id="t2ff90449" class="t" style="left:1586.80px;top:412.84px;font-size:15.4px;line-height:15.4px;font-weight:400;color:#515151;letter-spacing:-0.560px;">Active</div>
<div style="position:absolute;left:267px;top:486.0px;width:1488px;height:1px;background:#f3f3f3"></div>
<div style="position:absolute;left:281.5px;top:455.05px;width:17.4px;height:17.4px;box-sizing:border-box;border:1px solid #959595;border-radius:3px;background:#fff"></div>
<div id="t209b5a06" class="t" style="left:325.30px;top:457.61px;font-size:15.4px;line-height:15.4px;font-weight:400;color:#4874b2;letter-spacing:-0.240px;">2026-01-10</div>
<div id="t6b71bb27" class="t" style="left:780.60px;top:457.61px;font-size:15.4px;line-height:15.4px;font-weight:400;color:#515151;letter-spacing:-0.142px;">10/01/2026</div>
<div class="t" style="right:593.10px;top:457.61px;font-size:15.4px;line-height:15.4px;color:#515151;letter-spacing:-0.25px;margin-right:-0.25px">0</div>
<div class="t" style="right:289.10px;top:457.61px;font-size:15.4px;line-height:15.4px;color:#515151;letter-spacing:-0.25px;margin-right:-0.25px">0.00</div>
<div id="t34c9e1b4" class="t" style="left:1586.80px;top:457.61px;font-size:15.4px;line-height:15.4px;font-weight:400;color:#515151;letter-spacing:-0.560px;">Active</div>
<div style="position:absolute;left:267px;top:530.5px;width:1488px;height:1px;background:#f3f3f3"></div>
<div style="position:absolute;left:281.5px;top:499.82000000000005px;width:17.4px;height:17.4px;box-sizing:border-box;border:1px solid #959595;border-radius:3px;background:#fff"></div>
<div id="tc1be3766" class="t" style="left:325.30px;top:502.38px;font-size:15.4px;line-height:15.4px;font-weight:400;color:#4874b2;letter-spacing:-0.240px;">2026-01-09</div>
<div id="tbd29773d" class="t" style="left:780.60px;top:502.38px;font-size:15.4px;line-height:15.4px;font-weight:400;color:#515151;letter-spacing:-0.100px;">9/01/2026</div>
<div class="t" style="right:593.10px;top:502.38px;font-size:15.4px;line-height:15.4px;color:#515151;letter-spacing:-0.25px;margin-right:-0.25px">0</div>
<div class="t" style="right:289.10px;top:502.38px;font-size:15.4px;line-height:15.4px;color:#515151;letter-spacing:-0.25px;margin-right:-0.25px">0.00</div>
<div id="tb882a696" class="t" style="left:1586.80px;top:502.38px;font-size:15.4px;line-height:15.4px;font-weight:400;color:#515151;letter-spacing:-0.560px;">Active</div>
<div style="position:absolute;left:267px;top:575.5px;width:1488px;height:1px;background:#f3f3f3"></div>
<div style="position:absolute;left:281.5px;top:544.59px;width:17.4px;height:17.4px;box-sizing:border-box;border:1px solid #959595;border-radius:3px;background:#fff"></div>
<div id="tec539278" class="t" style="left:325.30px;top:547.15px;font-size:15.4px;line-height:15.4px;font-weight:400;color:#4874b2;letter-spacing:-0.240px;">2026-01-08</div>
<div id="t22161b22" class="t" style="left:780.60px;top:547.15px;font-size:15.4px;line-height:15.4px;font-weight:400;color:#515151;letter-spacing:-0.100px;">8/01/2026</div>
<div class="t" style="right:593.10px;top:547.15px;font-size:15.4px;line-height:15.4px;color:#515151;letter-spacing:-0.25px;margin-right:-0.25px">0</div>
<div class="t" style="right:289.10px;top:547.15px;font-size:15.4px;line-height:15.4px;color:#515151;letter-spacing:-0.25px;margin-right:-0.25px">0.00</div>
<div id="t428034cf" class="t" style="left:1586.80px;top:547.15px;font-size:15.4px;line-height:15.4px;font-weight:400;color:#515151;letter-spacing:-0.560px;">Active</div>
<div style="position:absolute;left:267px;top:620.5px;width:1488px;height:1px;background:#f3f3f3"></div>
<div style="position:absolute;left:281.5px;top:589.36px;width:17.4px;height:17.4px;box-sizing:border-box;border:1px solid #959595;border-radius:3px;background:#fff"></div>
<div id="t5c6c8454" class="t" style="left:325.30px;top:591.92px;font-size:15.4px;line-height:15.4px;font-weight:400;color:#4874b2;letter-spacing:-0.240px;">2026-01-07</div>
<div id="tce0e0723" class="t" style="left:780.60px;top:591.92px;font-size:15.4px;line-height:15.4px;font-weight:400;color:#515151;letter-spacing:-0.100px;">7/01/2026</div>
<div class="t" style="right:593.10px;top:591.92px;font-size:15.4px;line-height:15.4px;color:#515151;letter-spacing:-0.25px;margin-right:-0.25px">0</div>
<div class="t" style="right:289.10px;top:591.92px;font-size:15.4px;line-height:15.4px;color:#515151;letter-spacing:-0.25px;margin-right:-0.25px">0.00</div>
<div id="tf550fee0" class="t" style="left:1586.80px;top:591.92px;font-size:15.4px;line-height:15.4px;font-weight:400;color:#515151;letter-spacing:-0.560px;">Active</div>
<div style="position:absolute;left:267px;top:665.0px;width:1488px;height:1px;background:#f3f3f3"></div>
<div style="position:absolute;left:281.5px;top:634.13px;width:17.4px;height:17.4px;box-sizing:border-box;border:1px solid #959595;border-radius:3px;background:#fff"></div>
<div id="tc72444bb" class="t" style="left:325.30px;top:636.69px;font-size:15.4px;line-height:15.4px;font-weight:400;color:#4874b2;letter-spacing:-0.240px;">2026-01-06</div>
<div id="ta2a806be" class="t" style="left:780.60px;top:636.69px;font-size:15.4px;line-height:15.4px;font-weight:400;color:#515151;letter-spacing:-0.100px;">6/01/2026</div>
<div class="t" style="right:593.10px;top:636.69px;font-size:15.4px;line-height:15.4px;color:#515151;letter-spacing:-0.25px;margin-right:-0.25px">0</div>
<div class="t" style="right:289.10px;top:636.69px;font-size:15.4px;line-height:15.4px;color:#515151;letter-spacing:-0.25px;margin-right:-0.25px">0.00</div>
<div id="t868f045d" class="t" style="left:1586.80px;top:636.69px;font-size:15.4px;line-height:15.4px;font-weight:400;color:#515151;letter-spacing:-0.560px;">Active</div>
<div style="position:absolute;left:267px;top:710.0px;width:1488px;height:1px;background:#f3f3f3"></div>
<div style="position:absolute;left:281.5px;top:678.9px;width:17.4px;height:17.4px;box-sizing:border-box;border:1px solid #959595;border-radius:3px;background:#fff"></div>
<div id="taba9c3cb" class="t" style="left:325.30px;top:681.46px;font-size:15.4px;line-height:15.4px;font-weight:400;color:#4874b2;letter-spacing:-0.240px;">2026-01-05</div>
<div id="tfd608b40" class="t" style="left:780.60px;top:681.46px;font-size:15.4px;line-height:15.4px;font-weight:400;color:#515151;letter-spacing:-0.100px;">5/01/2026</div>
<div class="t" style="right:593.10px;top:681.46px;font-size:15.4px;line-height:15.4px;color:#515151;letter-spacing:-0.25px;margin-right:-0.25px">0</div>
<div class="t" style="right:289.10px;top:681.46px;font-size:15.4px;line-height:15.4px;color:#515151;letter-spacing:-0.25px;margin-right:-0.25px">0.00</div>
<div id="t8b84a25c" class="t" style="left:1586.80px;top:681.46px;font-size:15.4px;line-height:15.4px;font-weight:400;color:#515151;letter-spacing:-0.560px;">Active</div>
<div style="position:absolute;left:267px;top:754.5px;width:1488px;height:1px;background:#f3f3f3"></div>
<div style="position:absolute;left:281.5px;top:723.67px;width:17.4px;height:17.4px;box-sizing:border-box;border:1px solid #959595;border-radius:3px;background:#fff"></div>
<div id="t3577f62f" class="t" style="left:325.30px;top:726.23px;font-size:15.4px;line-height:15.4px;font-weight:400;color:#4874b2;letter-spacing:-0.240px;">2026-01-04</div>
<div id="t90c67832" class="t" style="left:780.60px;top:726.23px;font-size:15.4px;line-height:15.4px;font-weight:400;color:#515151;letter-spacing:-0.200px;">4/01/2026</div>
<div class="t" style="right:593.10px;top:726.23px;font-size:15.4px;line-height:15.4px;color:#515151;letter-spacing:-0.25px;margin-right:-0.25px">0</div>
<div class="t" style="right:289.10px;top:726.23px;font-size:15.4px;line-height:15.4px;color:#515151;letter-spacing:-0.25px;margin-right:-0.25px">0.00</div>
<div id="tde912f13" class="t" style="left:1586.80px;top:726.23px;font-size:15.4px;line-height:15.4px;font-weight:400;color:#515151;letter-spacing:-0.560px;">Active</div>
<div style="position:absolute;left:267px;top:799.5px;width:1488px;height:1px;background:#f3f3f3"></div>
<div style="position:absolute;left:281.5px;top:768.4399999999999px;width:17.4px;height:17.4px;box-sizing:border-box;border:1px solid #959595;border-radius:3px;background:#fff"></div>
<div id="t904956f0" class="t" style="left:325.30px;top:771.00px;font-size:15.4px;line-height:15.4px;font-weight:400;color:#4874b2;letter-spacing:-0.240px;">2026-01-03</div>
<div id="t9b91d9a4" class="t" style="left:780.60px;top:771.00px;font-size:15.4px;line-height:15.4px;font-weight:400;color:#515151;letter-spacing:-0.100px;">3/01/2026</div>
<div class="t" style="right:593.10px;top:771.00px;font-size:15.4px;line-height:15.4px;color:#515151;letter-spacing:-0.25px;margin-right:-0.25px">0</div>
<div class="t" style="right:289.10px;top:771.00px;font-size:15.4px;line-height:15.4px;color:#515151;letter-spacing:-0.25px;margin-right:-0.25px">0.00</div>
<div id="t51da5978" class="t" style="left:1586.80px;top:771.00px;font-size:15.4px;line-height:15.4px;font-weight:400;color:#515151;letter-spacing:-0.560px;">Active</div>
<div style="position:absolute;left:267px;top:844.5px;width:1488px;height:1px;background:#f3f3f3"></div>
<div style="position:absolute;left:281.5px;top:813.2099999999999px;width:17.4px;height:17.4px;box-sizing:border-box;border:1px solid #959595;border-radius:3px;background:#fff"></div>
<div id="t34957953" class="t" style="left:325.30px;top:815.77px;font-size:15.4px;line-height:15.4px;font-weight:400;color:#4874b2;letter-spacing:-0.240px;">2026-01-02</div>
<div id="te549b4dc" class="t" style="left:780.60px;top:815.77px;font-size:15.4px;line-height:15.4px;font-weight:400;color:#515151;letter-spacing:-0.100px;">2/01/2026</div>
<div class="t" style="right:593.10px;top:815.77px;font-size:15.4px;line-height:15.4px;color:#515151;letter-spacing:-0.25px;margin-right:-0.25px">0</div>
<div class="t" style="right:289.10px;top:815.77px;font-size:15.4px;line-height:15.4px;color:#515151;letter-spacing:-0.25px;margin-right:-0.25px">0.00</div>
<div id="t97bac7e7" class="t" style="left:1586.80px;top:815.77px;font-size:15.4px;line-height:15.4px;font-weight:400;color:#515151;letter-spacing:-0.560px;">Active</div>
<div style="position:absolute;left:267px;top:889.0px;width:1488px;height:1px;background:#f3f3f3"></div>
<div style="position:absolute;left:281.5px;top:857.9800000000001px;width:17.4px;height:17.4px;box-sizing:border-box;border:1px solid #959595;border-radius:3px;background:#fff"></div>
<div id="t9fcd552e" class="t" style="left:325.30px;top:860.54px;font-size:15.4px;line-height:15.4px;font-weight:400;color:#4874b2;letter-spacing:-0.240px;">2026-01-01</div>
<div id="t06eb582f" class="t" style="left:780.60px;top:860.54px;font-size:15.4px;line-height:15.4px;font-weight:400;color:#515151;letter-spacing:-0.100px;">1/01/2026</div>
<div class="t" style="right:593.10px;top:860.54px;font-size:15.4px;line-height:15.4px;color:#515151;letter-spacing:-0.25px;margin-right:-0.25px">0</div>
<div class="t" style="right:289.10px;top:860.54px;font-size:15.4px;line-height:15.4px;color:#515151;letter-spacing:-0.25px;margin-right:-0.25px">0.00</div>
<div id="te52d4fef" class="t" style="left:1586.80px;top:860.54px;font-size:15.4px;line-height:15.4px;font-weight:400;color:#515151;letter-spacing:-0.560px;">Active</div>
<div style="position:absolute;left:282px;top:903px;width:17px;height:1.2px;background:#8a8886"></div>
<div style="position:absolute;left:265px;top:904px;width:1510px;height:1px;background:#e6e6e6"></div>
<div style="position:absolute;left:1762px;top:342.5px;width:7px;height:97.5px;background:#bdbdbd;border-radius:4px"></div>
<div id="tf10353bb" class="t" style="left:265.72px;top:922.25px;font-size:14px;line-height:14px;font-weight:400;color:#454545;letter-spacing:-0.320px;">Rows: 91</div>
<div id="t3c84561c" class="t" style="left:345.10px;top:922.25px;font-size:14px;line-height:14px;font-weight:400;color:#454545;">Selected: 1</div>
<svg style="position:absolute;left:13px;top:962px;" width="8" height="8" viewBox="0 0 8 8"><path d="M0 0 Q0 8 8 8 H0 Z" fill="#3c3c3c"/></svg>
<svg style="position:absolute;left:1818px;top:962px;" width="8" height="8" viewBox="0 0 8 8"><path d="M8 0 Q8 8 0 8 H8 Z" fill="#3c3c3c"/></svg>
<svg style="position:absolute;left:0;top:0" width="1842" height="984"><rect x="13" y="8.8" width="1814" height="963.2" fill="none" stroke="#7a7a7a" stroke-width="1.8" stroke-dasharray="4.2 4.27"/></svg>
<div id="tb15e0632" class="t" style="left:1705.00px;top:978.07px;font-size:20px;line-height:20px;font-weight:400;color:#2a7a9a;">V</div>
<div id="t0b909c1d" class="t" style="left:1762.80px;top:978.07px;font-size:20px;line-height:20px;font-weight:400;color:#2a7a9a;">P</div>
</body></html>
